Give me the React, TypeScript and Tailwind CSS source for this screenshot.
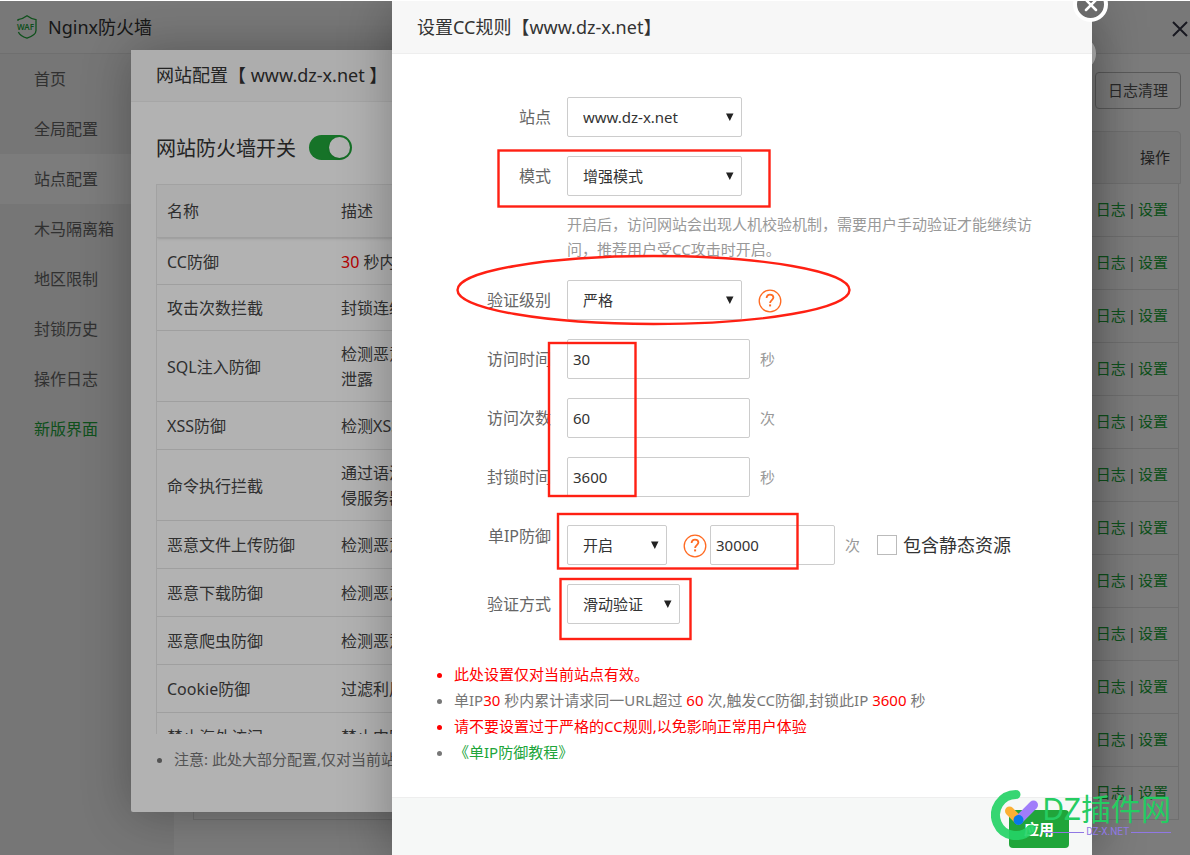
import React, { useState } from 'react';
import { X } from 'lucide-react';

const MENU = ['首页', '全局配置', '站点配置', '木马隔离箱', '地区限制', '封锁历史', '操作日志', '新版界面'];

const RULES = [
  { name: 'CC防御', desc: <><span className="text-[#f00]">30</span> 秒内请求超过</>, height: 'h-[47px]' },
  { name: '攻击次数拦截', desc: '封锁连续恶意请求', height: 'h-[46px]' },
  { name: 'SQL注入防御', desc: <>检测恶意语句<br />泄露</>, height: 'h-[71px]' },
  { name: 'XSS防御', desc: '检测XSS攻击', height: 'h-12' },
  { name: '命令执行拦截', desc: <>通过语法分析<br />侵服务器</>, height: 'h-[71px]' },
  { name: '恶意文件上传防御', desc: '检测恶意文件', height: 'h-12' },
  { name: '恶意下载防御', desc: '检测恶意下载', height: 'h-12' },
  { name: '恶意爬虫防御', desc: '检测恶意爬虫', height: 'h-12' },
  { name: 'Cookie防御', desc: '过滤利用Cookie', height: 'h-12' },
  { name: '禁止海外访问', desc: '禁止中国以外', height: 'h-12' },
];

const LOG_ROWS = 12;

interface SelectProps {
  id: string;
  options: string[];
  className: string;
}

function Select({ id, options, className }: SelectProps) {
  return (
    <div className={`relative shrink-0 ${className}`}>
      <select
        id={id}
        className="h-10 w-full appearance-none rounded-xs border border-[#ccc] bg-white pl-[15px] pr-5 text-[15px] text-[#333] outline-none"
      >
        {options.map((o) => (
          <option key={o}>{o}</option>
        ))}
      </select>
      <svg className="pointer-events-none absolute right-2 top-4 h-2 w-2" viewBox="0 0 8 8" fill="#222">
        <path d="M0 0.5h7.500L3.800 8z" />
      </svg>
    </div>
  );
}

interface FieldProps {
  id: string;
  value: string;
  className: string;
  label?: string;
}

function TextField({ id, value, className, label }: FieldProps) {
  return (
    <input
      id={id}
      aria-label={label}
      type="text"
      defaultValue={value}
      className={`h-10 shrink-0 rounded-xs border border-[#ccc] bg-white px-[5px] text-[15px] text-[#333] outline-none ${className}`}
    />
  );
}

function Row({ id, label, children }: { id: string; label: string; children: React.ReactNode }) {
  return (
    <div className="flex">
      <label htmlFor={id} className="mr-4 w-[159px] shrink-0 text-right text-base leading-10 text-[#666]">
        {label}
      </label>
      <div className="flex min-w-0 items-center">{children}</div>
    </div>
  );
}

function HelpLink() {
  return (
    <a href="#help" aria-label="帮助" className="ml-4 shrink-0 pt-0.5">
      <svg className="h-6 w-6" viewBox="0 0 24 24" fill="none" stroke="#ff6a22">
        <circle cx="12" cy="12" r="10.8" strokeWidth="1.3" />
        <path d="M8.6 9c0-2.200 1.500-3.400 3.400-3.400s3.400 1.200 3.400 3c0 2.300-3.300 2.700-3.300 5.300" strokeWidth="1.8" />
        <path d="M11.1 16.400h2" strokeWidth="2" />
      </svg>
    </a>
  );
}

function CloseButton() {
  return (
    <button
      aria-label="关闭"
      className="absolute -right-4 -top-3.5 z-10 flex h-[35px] w-[35px] items-center justify-center rounded-full border-4 border-white bg-[#6b6b6b] text-white"
    >
      <X className="h-5 w-5 shrink-0" strokeWidth={3} />
    </button>
  );
}

function menuClass(item: string) {
  const base = 'block h-[50px] pl-[34px] text-base leading-[50px]';
  if (item === '站点配置') return `${base} bg-white text-[#666]`;
  if (item === '新版界面') return `${base} text-[#20a53a]`;
  return `${base} text-[#666]`;
}

function BasePage() {
  return (
    <div className="flex min-h-[calc(100vh-1px)] flex-col">
      <header className="flex h-[53px] shrink-0 items-center border-b border-[#e4e4e4] bg-[#f8f8f8] pl-4 pr-0.5">
        <svg className="mr-2.5 h-6 w-[22px]" viewBox="0 0 22 24" fill="none" stroke="#20a53a" strokeWidth="1.3">
          <path d="M2 6V4.600C5.500 4 8.500 2.800 11 .8c2.500 2 5.500 3.200 9 3.800v11c0 3.500-4 6-9 7.600-4-1.300-7.500-3.400-8.600-6.200" />
          <text x="9.500" y="15" textAnchor="middle" fontSize="8" fontWeight="600" fill="#20a53a" stroke="none">WAF</text>
        </svg>
        <h1 className="flex-1 text-lg text-[#333]">Nginx防火墙</h1>
        <button aria-label="关闭窗口" className="pt-1">
          <svg className="h-4 w-4" viewBox="0 0 16 16" stroke="#334" strokeWidth="2">
            <path d="M1 1l14 14M15 1L1 15" />
          </svg>
        </button>
      </header>

      <div className="flex flex-1">
        <nav className="w-[174px] shrink-0 bg-[#f2f2f2]">
          {MENU.map((item) => (
            <a key={item} href="#menu" className={menuClass(item)}>
              {item}
            </a>
          ))}
        </nav>

        <main className="flex-1 pl-[19px] pr-[9px] pt-[18px]">
          <div className="flex justify-end">
            <button className="h-[37px] rounded border border-[#bbb] bg-white px-3 text-[15px] text-[#555]">
              日志清理
            </button>
          </div>
          <div className="mt-[22px] flex h-[53px] items-center justify-end rounded-t border border-[#e4e4e4] bg-[#f6f6f6] pr-2.5 text-[15px] text-[#444]">
            操作
          </div>
          <div className="mr-0.5 border-x border-[#e4e4e4]">
            <table className="w-full border-separate border-spacing-0 text-right text-[15px]">
              <tbody>
                {Array.from({ length: LOG_ROWS }, (_, i) => (
                  <tr key={i}>
                    <td className="h-[53px] border-b border-[#e4e4e4] p-0 pb-0.5 pr-2.5 text-[#555]">
                      <a href="#log" className="text-[#20a53a]">日志</a>
                      <span className="px-0.5">|</span>
                      <a href="#set" className="text-[#20a53a]">设置</a>
                    </td>
                  </tr>
                ))}
              </tbody>
            </table>
          </div>
        </main>
      </div>
    </div>
  );
}

function SiteDialog() {
  const [enabled, setEnabled] = useState(true);

  return (
    <div className="absolute inset-0 isolate bg-black/30 pl-[131px] pr-[110px] pt-[49px]">
      <section className="relative rounded-xs bg-white shadow-[1px_1px_50px_rgba(0,0,0,0.3)]">
        <CloseButton />
        <h2 className="h-[52px] border-b border-[#eee] bg-[#f8f8f8] pl-[25px] text-lg leading-[51px] text-[#333]">
          网站配置【 www.dz-x.net 】
        </h2>
        <div className="px-[25px] pb-[39px] pt-[30px]">
          <div className="flex h-[30px] items-center gap-[13px]">
            <label htmlFor="site-waf" className="pt-1 text-xl text-[#333]">网站防火墙开关</label>
            <input
              id="site-waf"
              type="checkbox"
              role="switch"
              checked={enabled}
              onChange={(e) => setEnabled(e.target.checked)}
              className="flex h-[25px] w-[43px] appearance-none items-center rounded-full bg-[#ccc] px-0.5 before:h-[21px] before:w-[21px] before:rounded-full before:bg-white before:shadow-sm checked:justify-end checked:bg-[#20a53a]"
            />
          </div>
          <div className="mt-[22px] h-[550px] overflow-hidden border-l border-t border-[#e8e8e8]">
            <table className="w-full table-fixed border-separate border-spacing-0 text-left text-base leading-[25px] text-[#444]">
              <thead>
                <tr className="shadow-sm">
                  <th className="h-[53px] w-[174px] border-b border-[#e4e4e4] bg-[#f8f8f8] p-0 pl-2.5 font-normal">名称</th>
                  <th className="border-b border-[#e4e4e4] bg-[#f8f8f8] p-0 pl-2.5 font-normal">描述</th>
                </tr>
              </thead>
              <tbody>
                {RULES.map((r) => (
                  <tr key={r.name}>
                    <td className={`${r.height} border-b border-[#e4e4e4] p-0 pl-2.5 pt-0.5`}>{r.name}</td>
                    <td className="border-b border-[#e4e4e4] p-0 pl-2.5 pt-0.5">{r.desc}</td>
                  </tr>
                ))}
              </tbody>
            </table>
          </div>
          <ul className="mt-3 list-disc pb-px pl-[18px] text-[15px] leading-[26px] text-[#777]">
            <li>注意: 此处大部分配置,仅对当前站点有效</li>
          </ul>
        </div>
      </section>
    </div>
  );
}

// Red marker outlines drawn over the form
function Markers() {
  return (
    <svg
      className="pointer-events-none absolute left-0 top-0 h-[660px] w-[700px]"
      viewBox="392 1 700 660"
      fill="none"
      stroke="#ff2013"
      strokeWidth="2.4"
    >
      <rect x="498.500" y="150.500" width="271" height="56" />
      <ellipse cx="653.500" cy="290" rx="196" ry="34" />
      <rect x="549" y="343" width="86.500" height="153" />
      <rect x="558" y="514" width="239.500" height="54.500" />
      <rect x="560.500" y="579" width="130" height="60" />
    </svg>
  );
}

function CcDialog() {
  return (
    <div className="absolute inset-0 isolate flex justify-end bg-black/30 pr-[98px]">
      <section className="relative h-fit w-[700px] bg-white shadow-[1px_1px_50px_rgba(0,0,0,0.3)]">
        <CloseButton />
        <h2 className="h-[53px] border-b border-[#eee] bg-[#f7f7f7] pl-[25px] text-lg leading-[53px] text-[#333]">
          设置CC规则【www.dz-x.net】
        </h2>

        <form className="flex flex-col gap-[19px] pt-[43px]">
          <Row id="site" label="站点">
            <Select id="site" className="w-[175px]" options={['www.dz-x.net']} />
          </Row>
          <Row id="mode" label="模式">
            <Select id="mode" className="w-[175px]" options={['增强模式', '标准模式']} />
          </Row>
          <p className="-mb-px -mt-[3px] ml-[175px] w-[470px] text-[15px] leading-[25px] text-[#999]">
            开启后，访问网站会出现人机校验机制，需要用户手动验证才能继续访问，推荐用户受CC攻击时开启。
          </p>
          <Row id="level" label="验证级别">
            <Select id="level" className="w-[175px]" options={['严格', '宽松']} />
            <HelpLink />
          </Row>
          <Row id="cycle" label="访问时间">
            <TextField id="cycle" value="30" className="w-[183px]" />
            <span className="ml-2.5 text-[15px] text-[#999]">秒</span>
          </Row>
          <Row id="limit" label="访问次数">
            <TextField id="limit" value="60" className="w-[183px]" />
            <span className="ml-2.5 text-[15px] text-[#999]">次</span>
          </Row>
          <Row id="block" label="封锁时间">
            <TextField id="block" value="3600" className="w-[183px]" />
            <span className="ml-2.5 text-[15px] text-[#999]">秒</span>
          </Row>
          <div className="mt-[9px] flex">
            <label htmlFor="single-ip" className="mr-4 w-[159px] shrink-0 text-right text-base leading-[22px] text-[#666]">
              单IP防御
            </label>
            <div className="flex items-center">
              <Select id="single-ip" className="w-[100px]" options={['开启', '关闭']} />
              <HelpLink />
              <TextField id="single-limit" label="单IP次数" value="30000" className="ml-[3px] w-[125px]" />
              <span className="ml-2.5 text-[15px] text-[#999]">次</span>
              <label className="ml-[17px] flex items-center gap-1.5 text-lg text-[#333]">
                <input type="checkbox" className="h-5 w-5 appearance-none border border-[#bbb] bg-white checked:bg-[#20a53a]" />
                包含静态资源
              </label>
            </div>
          </div>
          <Row id="verify" label="验证方式">
            <Select id="verify" className="w-[113px]" options={['滑动验证', '跳转验证']} />
          </Row>
        </form>

        <ul className="mt-[37px] list-disc pb-8 pl-[62px] text-[15px] leading-[26px] text-[#777]">
          <li className="text-[#f00]">此处设置仅对当前站点有效。</li>
          <li>
            单IP<span className="text-[#f00]">30</span> 秒内累计请求同一URL超过 <span className="text-[#f00]">60</span>{' '}
            次,触发CC防御,封锁此IP <span className="text-[#f00]">3600</span> 秒
          </li>
          <li className="text-[#f00]">请不要设置过于严格的CC规则,以免影响正常用户体验</li>
          <li>
            <a href="#guide" className="text-[#20a53a]">《单IP防御教程》</a>
          </li>
        </ul>

        <footer className="flex justify-end border-t border-[#eee] bg-[#f6f8f7] pb-3 pr-[23px] pt-3">
          <button className="h-[38px] w-[60px] rounded bg-[#20a53a] text-[15px] font-bold text-white">应用</button>
        </footer>
        <Markers />
      </section>
    </div>
  );
}

function Watermark() {
  return (
    <div className="pointer-events-none absolute bottom-[15px] right-[19px] flex items-center">
      <svg className="h-[50px] w-[51px]" viewBox="0 0 51 50" fill="none" strokeLinecap="round">
        <path d="M25 4.500A20.500 20.500 0 1 0 40 39" stroke="#25d366" strokeOpacity="0.92" strokeWidth="9" />
        <path d="M18.500 21l9 9" stroke="#fbb034" strokeWidth="9" />
        <path d="M27.500 30l15-15" stroke="#a07dfa" strokeWidth="9" />
        <circle cx="27.500" cy="30" r="5" fill="#0878e8" />
      </svg>
      <div className="flex flex-col text-[#25cc62]">
        <span className="text-[30px] leading-8">DZ插件网</span>
        <span className="ml-0.5 flex items-center gap-0.5 pt-0.5 font-[Roboto,sans-serif] text-[10px] leading-[10px] text-[#9078e4]">
          <i className="h-px flex-1 bg-[#9078e4]" />
          DZ-X.NET
          <i className="h-px flex-1 bg-[#9078e4]" />
        </span>
      </div>
    </div>
  );
}

export default function App() {
  return (
    <div className="min-h-screen bg-white pt-px font-['Noto_Sans','Noto_Sans_CJK_SC',sans-serif]">
      <div className="relative overflow-hidden">
        <BasePage />
        <SiteDialog />
        <CcDialog />
        <Watermark />
      </div>
    </div>
  );
}
